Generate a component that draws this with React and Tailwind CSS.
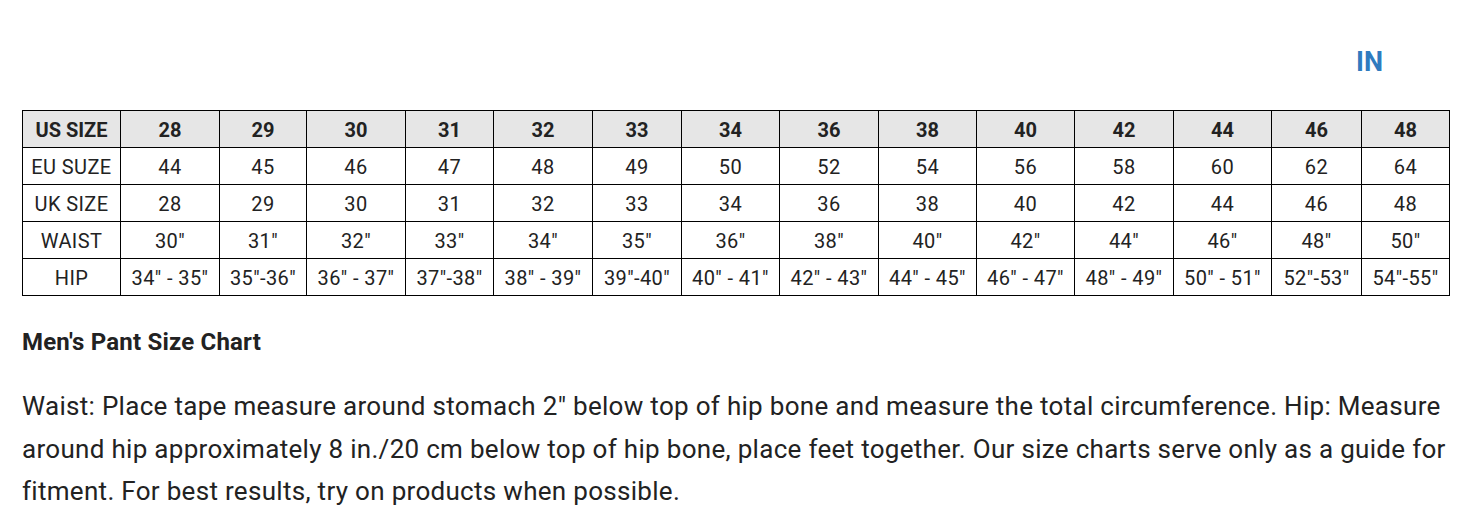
import React from "react";

const widths = [98, 99, 87, 99, 88, 99, 89, 98, 99, 98, 98, 99, 98, 90, 88];
const header = ["US SIZE", "28", "29", "30", "31", "32", "33", "34", "36", "38", "40", "42", "44", "46", "48"];
const rows = [
  ["EU SUZE", "44", "45", "46", "47", "48", "49", "50", "52", "54", "56", "58", "60", "62", "64"],
  ["UK SIZE", "28", "29", "30", "31", "32", "33", "34", "36", "38", "40", "42", "44", "46", "48"],
  ["WAIST", '30"', '31"', '32"', '33"', '34"', '35"', '36"', '38"', '40"', '42"', '44"', '46"', '48"', '50"'],
  ["HIP", '34" - 35"', '35"-36"', '36" - 37"', '37"-38"', '38" - 39"', '39"-40"', '40" - 41"', '42" - 43"', '44" - 45"', '46" - 47"', '48" - 49"', '50" - 51"', '52"-53"', '54"-55"'],
];

export default function App() {
  return (
    <div className="w-[1474px] h-[531px] bg-white text-[#222] px-[22px]" style={{ fontFamily: "Roboto, 'Liberation Sans', sans-serif" }}>
      <div className="flex justify-end pr-[69px] pt-[45px] h-[110px]">
        <span className="text-[27px] font-bold leading-[34px] text-[#2f7bbf]">IN</span>
      </div>
      <table className="table-fixed border-collapse w-[1428px]">
        <colgroup>
          {widths.map((w, i) => (
            <col key={i} style={{ width: w }} />
          ))}
        </colgroup>
        <thead>
          <tr className="bg-[#e6e6e6] h-[37px]">
            {header.map((h, i) => (
              <th key={i} className="border border-black text-[20px] font-bold text-center p-0 pt-[3px] leading-[33px]">
                {h}
              </th>
            ))}
          </tr>
        </thead>
        <tbody>
          {rows.map((r, ri) => (
            <tr key={ri} className="h-[37px]">
              {r.map((c, ci) => (
                <td key={ci} className="border border-black text-[20px] tracking-[0.4px] text-center p-0 pt-[3px] leading-[33px] whitespace-nowrap">
                  {c}
                </td>
              ))}
            </tr>
          ))}
        </tbody>
      </table>
      <h2 className="text-[24px] tracking-[0.2px] font-bold leading-[28px] mt-[32px]">Men's Pant Size Chart</h2>
      <p className="text-[26px] tracking-[0.3px] leading-[42.5px] mt-[29px]">
        Waist: Place tape measure around stomach 2" below top of hip bone and measure the total circumference. Hip: Measure
        <br />
        around hip approximately 8 in./20 cm below top of hip bone, place feet together. Our size charts serve only as a guide for
        <br />
        fitment. For best results, try on products when possible.
      </p>
    </div>
  );
}
